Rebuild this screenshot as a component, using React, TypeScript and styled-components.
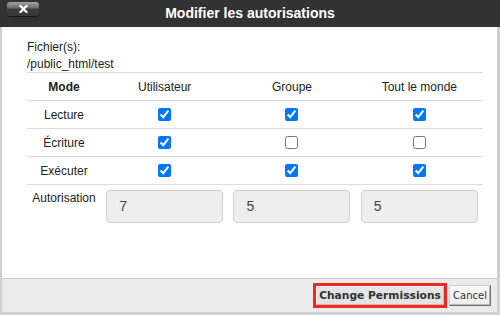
import React from "react";
import styled, { createGlobalStyle } from "styled-components";

const Global = createGlobalStyle`
  html, body { margin: 0; padding: 0; background: #fff; }
  body { width: 500px; height: 315px; overflow: hidden; font-family: "Liberation Sans", Arial, sans-serif; }
`;

const Dialog = styled.div`
  width: 500px;
  height: 315px;
  display: flex;
  flex-direction: column;
  box-sizing: border-box;
`;

const TitleBar = styled.div`
  height: 27px;
  flex: none;
  background: #323232;
  display: grid;
  grid-template-columns: 1fr auto 1fr;
  align-items: center;
`;

const CloseButton = styled.button`
  justify-self: start;
  align-self: start;
  margin: 2px 0 0 7px;
  width: 32px;
  height: 14px;
  padding: 0;
  border: none;
  border-radius: 3px;
  background: linear-gradient(#a3a3a3 0%, #6e6e6e 40%, #3d3a38 52%, #3a3633 100%);
  box-shadow: 0 1px 1px rgba(0, 0, 0, 0.6);
  display: flex;
  align-items: center;
  justify-content: center;
`;

const Title = styled.h1`
  margin: 0;
  color: #fff;
  font-size: 14px;
  font-weight: bold;
  font-family: "Liberation Sans", Arial, sans-serif;
  line-height: 27px;
  padding-top: 0px;
`;

const Frame = styled.div`
  flex: 1;
  display: flex;
  flex-direction: column;
  border-left: 2px solid #cfcfcf;
  border-right: 3px solid #cfcfcf;
  border-bottom: 3px solid #cfcfcf;
  min-height: 0;
`;

const Body = styled.div`
  flex: 1;
  background: #fff;
  padding: 12px 14px 0 25px;
`;

const FileInfo = styled.div`
  font-size: 12px;
  line-height: 16.5px;
  color: #222;
  border-bottom: 1px solid #dcdcdc;
  padding-bottom: 0px;
`;

const Row = styled.div<{ $header?: boolean }>`
  display: grid;
  grid-template-columns: 74px repeat(3, 1fr);
  align-items: center;
  justify-items: center;
  height: 27px;
  border-bottom: 1px solid #dcdcdc;
  font-size: 12px;
  color: #222;
  font-weight: ${(p) => (p.$header ? "normal" : "normal")};
`;

const ModeHead = styled.span`
  font-weight: bold;
`;

const Check = styled.input`
  margin: 0;
  width: 13px;
  height: 13px;
  accent-color: #0075ff;
`;

const OctalRow = styled.div`
  display: grid;
  grid-template-columns: 74px repeat(3, 1fr);
  justify-items: center;
  align-items: start;
  padding-top: 5px;
  font-size: 12px;
  color: #222;
`;

const OctalLabel = styled.span`
  line-height: 14px;
  padding-top: 1px;
`;

const OctalInput = styled.div`
  box-sizing: border-box;
  width: 117px;
  height: 33px;
  border: 1px solid #cfcfcf;
  border-radius: 4px;
  background: #eeeeee;
  color: #444;
  font-size: 14px;
  line-height: 31px;
  padding-left: 12px;
`;

const Footer = styled.div`
  height: 33px;
  flex: none;
  background: #ebebeb;
  border-top: 1px solid #c8c8c8;
  display: flex;
  justify-content: flex-end;
  align-items: center;
  gap: 2px;
  padding-right: 6px;
`;

const Highlight = styled.div`
  border: 3px solid #f5261c;
  display: flex;
`;

const Button = styled.button<{ $primary?: boolean }>`
  box-sizing: border-box;
  margin: 0;
  font-family: "DejaVu Sans", Verdana, sans-serif;
  color: #333;
  cursor: pointer;
  padding: 0;
  font-size: ${(p) => (p.$primary ? "10.7px" : "10px")};
  font-weight: ${(p) => (p.$primary ? "bold" : "normal")};
  width: ${(p) => (p.$primary ? "128px" : "42px")};
  height: ${(p) => (p.$primary ? "19px" : "21px")};
  background: ${(p) => (p.$primary ? "#e4e4e4" : "linear-gradient(#fafafa, #ececec)")};
  border: 1px solid;
  border-color: ${(p) => (p.$primary ? "#fafafa #bdbdbd #bdbdbd #fafafa" : "#d0d0d0 #6f6f6f #6f6f6f #d0d0d0")};
  ${(p) => (p.$primary ? "" : "box-shadow: inset -1px -1px 0 #b8b8b8;")}
`;

const rows: { label: string; values: boolean[] }[] = [
  { label: "Lecture", values: [true, true, true] },
  { label: "Écriture", values: [true, false, false] },
  { label: "Exécuter", values: [true, true, true] },
];

export default function App() {
  return (
    <>
      <Global />
      <Dialog>
        <TitleBar>
          <CloseButton aria-label="close">
            <svg width="9" height="8" viewBox="0 0 9 8">
              <path d="M1.5 1 L7.5 7 M7.5 1 L1.5 7" stroke="#fff" strokeWidth="2.2" strokeLinecap="square" />
            </svg>
          </CloseButton>
          <Title>Modifier les autorisations</Title>
          <span />
        </TitleBar>
        <Frame>
          <Body>
            <FileInfo>
              Fichier(s):
              <br />
              /public_html/test
            </FileInfo>
            <Row $header>
              <ModeHead>Mode</ModeHead>
              <span>Utilisateur</span>
              <span>Groupe</span>
              <span>Tout le monde</span>
            </Row>
            {rows.map((r) => (
              <Row key={r.label}>
                <span>{r.label}</span>
                {r.values.map((v, i) => (
                  <Check key={i} type="checkbox" checked={v} readOnly />
                ))}
              </Row>
            ))}
            <OctalRow>
              <OctalLabel>Autorisation</OctalLabel>
              <OctalInput>7</OctalInput>
              <OctalInput>5</OctalInput>
              <OctalInput>5</OctalInput>
            </OctalRow>
          </Body>
          <Footer>
            <Highlight>
              <Button $primary>Change Permissions</Button>
            </Highlight>
            <Button>Cancel</Button>
          </Footer>
        </Frame>
      </Dialog>
    </>
  );
}
